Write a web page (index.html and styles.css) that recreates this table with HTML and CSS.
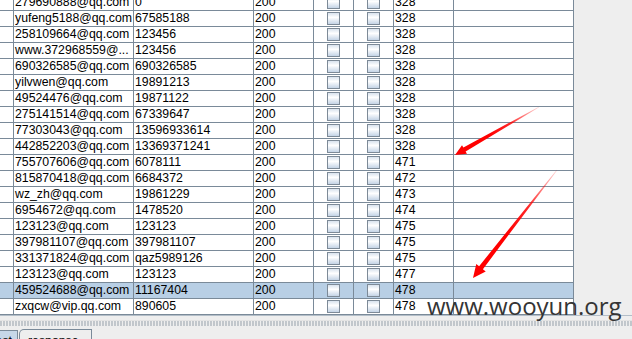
FILE: index.html
```html
<!DOCTYPE html>
<html>
<head>
<meta charset="utf-8">
<link rel="stylesheet" href="styles.css">
</head>
<body>
<div class="app">
  <div class="viewport">
    <div class="grid">
      <div class="row"><div class="c"></div><div class="c">279690888@qq.com</div><div class="c">0</div><div class="c">200</div><div class="c cb"><span class="box"></span></div><div class="c cb"><span class="box"></span></div><div class="c">328</div><div class="c"></div></div>
      <div class="row"><div class="c"></div><div class="c">yufeng5188@qq.com</div><div class="c">67585188</div><div class="c">200</div><div class="c cb"><span class="box"></span></div><div class="c cb"><span class="box"></span></div><div class="c">328</div><div class="c"></div></div>
      <div class="row"><div class="c"></div><div class="c">258109664@qq.com</div><div class="c">123456</div><div class="c">200</div><div class="c cb"><span class="box"></span></div><div class="c cb"><span class="box"></span></div><div class="c">328</div><div class="c"></div></div>
      <div class="row"><div class="c"></div><div class="c">www.372968559@...</div><div class="c">123456</div><div class="c">200</div><div class="c cb"><span class="box"></span></div><div class="c cb"><span class="box"></span></div><div class="c">328</div><div class="c"></div></div>
      <div class="row"><div class="c"></div><div class="c">690326585@qq.com</div><div class="c">690326585</div><div class="c">200</div><div class="c cb"><span class="box"></span></div><div class="c cb"><span class="box"></span></div><div class="c">328</div><div class="c"></div></div>
      <div class="row"><div class="c"></div><div class="c">yilvwen@qq.com</div><div class="c">19891213</div><div class="c">200</div><div class="c cb"><span class="box"></span></div><div class="c cb"><span class="box"></span></div><div class="c">328</div><div class="c"></div></div>
      <div class="row"><div class="c"></div><div class="c">49524476@qq.com</div><div class="c">19871122</div><div class="c">200</div><div class="c cb"><span class="box"></span></div><div class="c cb"><span class="box"></span></div><div class="c">328</div><div class="c"></div></div>
      <div class="row"><div class="c"></div><div class="c">275141514@qq.com</div><div class="c">67339647</div><div class="c">200</div><div class="c cb"><span class="box"></span></div><div class="c cb"><span class="box"></span></div><div class="c">328</div><div class="c"></div></div>
      <div class="row"><div class="c"></div><div class="c">77303043@qq.com</div><div class="c">13596933614</div><div class="c">200</div><div class="c cb"><span class="box"></span></div><div class="c cb"><span class="box"></span></div><div class="c">328</div><div class="c"></div></div>
      <div class="row"><div class="c"></div><div class="c">442852203@qq.com</div><div class="c">13369371241</div><div class="c">200</div><div class="c cb"><span class="box"></span></div><div class="c cb"><span class="box"></span></div><div class="c">328</div><div class="c"></div></div>
      <div class="row"><div class="c"></div><div class="c">755707606@qq.com</div><div class="c">6078111</div><div class="c">200</div><div class="c cb"><span class="box"></span></div><div class="c cb"><span class="box"></span></div><div class="c">471</div><div class="c"></div></div>
      <div class="row"><div class="c"></div><div class="c">815870418@qq.com</div><div class="c">6684372</div><div class="c">200</div><div class="c cb"><span class="box"></span></div><div class="c cb"><span class="box"></span></div><div class="c">472</div><div class="c"></div></div>
      <div class="row"><div class="c"></div><div class="c">wz_zh@qq.com</div><div class="c">19861229</div><div class="c">200</div><div class="c cb"><span class="box"></span></div><div class="c cb"><span class="box"></span></div><div class="c">473</div><div class="c"></div></div>
      <div class="row"><div class="c"></div><div class="c">6954672@qq.com</div><div class="c">1478520</div><div class="c">200</div><div class="c cb"><span class="box"></span></div><div class="c cb"><span class="box"></span></div><div class="c">474</div><div class="c"></div></div>
      <div class="row"><div class="c"></div><div class="c">123123@qq.com</div><div class="c">123123</div><div class="c">200</div><div class="c cb"><span class="box"></span></div><div class="c cb"><span class="box"></span></div><div class="c">475</div><div class="c"></div></div>
      <div class="row"><div class="c"></div><div class="c">397981107@qq.com</div><div class="c">397981107</div><div class="c">200</div><div class="c cb"><span class="box"></span></div><div class="c cb"><span class="box"></span></div><div class="c">475</div><div class="c"></div></div>
      <div class="row"><div class="c"></div><div class="c">331371824@qq.com</div><div class="c">qaz5989126</div><div class="c">200</div><div class="c cb"><span class="box"></span></div><div class="c cb"><span class="box"></span></div><div class="c">475</div><div class="c"></div></div>
      <div class="row"><div class="c"></div><div class="c">123123@qq.com</div><div class="c">123123</div><div class="c">200</div><div class="c cb"><span class="box"></span></div><div class="c cb"><span class="box"></span></div><div class="c">477</div><div class="c"></div></div>
      <div class="row selected"><div class="c"></div><div class="c">459524688@qq.com</div><div class="c">11167404</div><div class="c">200</div><div class="c cb"><span class="box"></span></div><div class="c cb"><span class="box"></span></div><div class="c">478</div><div class="c"></div></div>
      <div class="row"><div class="c"></div><div class="c">zxqcw@vip.qq.com</div><div class="c">890605</div><div class="c">200</div><div class="c cb"><span class="box"></span></div><div class="c cb"><span class="box"></span></div><div class="c">478</div><div class="c"></div></div>
    </div>
  </div>
  <div class="divider"></div>
  <div class="tabs">
    <div class="tab tab-sel">request</div>
    <div class="tab">response</div>
  </div>

  <svg class="arrows" width="632" height="339" viewBox="0 0 632 339">
    <defs>
      <linearGradient id="g1" gradientUnits="userSpaceOnUse" x1="539" y1="107" x2="455" y2="155">
        <stop offset="0" stop-color="#ff0000" stop-opacity="0.15"/>
        <stop offset="0.35" stop-color="#ff0000" stop-opacity="0.85"/>
        <stop offset="0.6" stop-color="#ff0000" stop-opacity="1"/>
      </linearGradient>
      <linearGradient id="g2" gradientUnits="userSpaceOnUse" x1="557" y1="170" x2="473" y2="278">
        <stop offset="0" stop-color="#ff0000" stop-opacity="0.15"/>
        <stop offset="0.35" stop-color="#ff0000" stop-opacity="0.85"/>
        <stop offset="0.6" stop-color="#ff0000" stop-opacity="1"/>
      </linearGradient>
    </defs>
    <polygon fill="url(#g1)" points="538.85,106.74 463.4,147.6 462,145.2 455,155 467,153.8 465.6,151.4 539.15,107.26"/>
    <polygon fill="url(#g2)" points="556.76,169.82 479.1,266.2 476.27,264.02 473,278 485.73,271.38 482.9,269.2 557.24,170.18"/>
  </svg>
  <div class="watermark">www.wooyun.org</div>
</div>
</body>
</html>
```

FILE: styles.css
```css
html, body {
  margin: 0;
  padding: 0;
}
body {
  width: 632px;
  height: 339px;
  overflow: hidden;
  background: #eeeeee;
  font-family: "Liberation Sans", Arial, sans-serif;
  font-size: 12.3px;
  color: #000;
}
.app {
  position: relative;
  width: 632px;
  height: 339px;
  overflow: hidden;
}
.viewport {
  height: 315px;
  overflow: hidden;
  border-bottom: 1px solid #b3bec8;
}
.grid {
  margin-top: -5px;
  width: 574px;
  background: #fff;
}
.row {
  display: grid;
  grid-template-columns: 14px 120px 120px 60px 40px 40px 60px 120px;
  height: 16px;
}
.row.selected {
  background: #b8cfe5;
}
.c {
  box-sizing: border-box;
  height: 16px;
  border-right: 1px solid #7a8a99;
  border-bottom: 1px solid #7a8a99;
  padding-left: 1px;
  line-height: 15px;
  white-space: nowrap;
  overflow: hidden;
}
.cb {
  display: flex;
  align-items: center;
  justify-content: center;
  padding-left: 0;
}
.box {
  box-sizing: border-box;
  width: 13px;
  height: 13px;
  border: 1px solid #7d8a97;
  background: linear-gradient(180deg, #d9e3ee 0%, #ffffff 40%, #c4d4e6 100%);
}
.divider {
  margin-top: 4px;
  height: 5px;
  background-image: radial-gradient(circle at 1px 1px, #a9b1b9 0.6px, transparent 0.9px);
  background-size: 3px 2px;
  border-top: 1px solid #e4e4e4;
}
.tabs {
  display: flex;
  align-items: flex-end;
  height: 13px;
}
.tab {
  box-sizing: border-box;
  border: 1px solid #7a8a99;
  border-bottom: none;
  white-space: nowrap;
  overflow: hidden;
}
.tab-sel {
  height: 9px;
  margin-left: -33px;
  width: 51px;
  padding-left: 4px;
  background: #c6d7e8;
  border-left: none;
  line-height: 20px;
}
.tab:not(.tab-sel) {
  height: 10px;
  margin-left: 1px;
  width: 73px;
  padding-left: 8px;
  border-top-left-radius: 5px;
  background: #eeeeee;
  line-height: 22px;
}
.arrows {
  position: absolute;
  left: 0;
  top: 0;
  pointer-events: none;
}
.watermark {
  position: absolute;
  left: 427px;
  top: 294px;
  font-family: "Open Sans", "DejaVu Sans", sans-serif;
  font-size: 24px;
  line-height: 24px;
  color: #353535;
  white-space: nowrap;
}
```
